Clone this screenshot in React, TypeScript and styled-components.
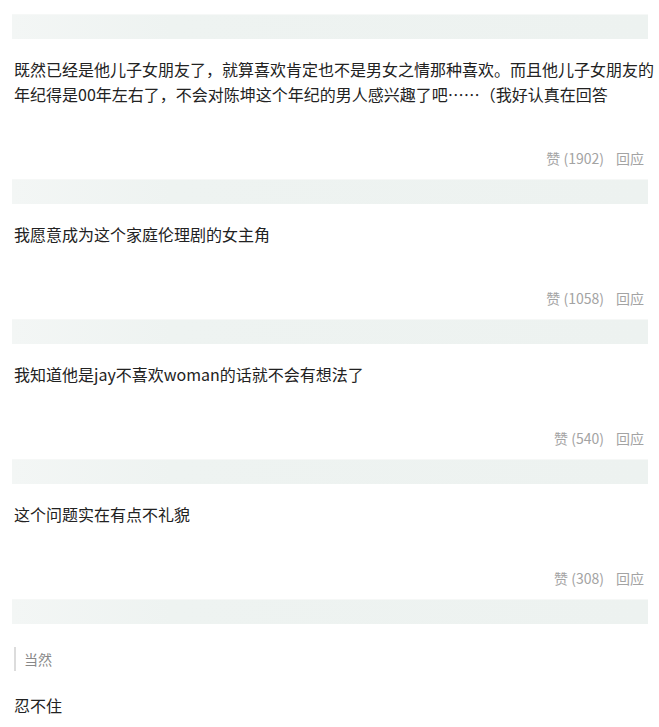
import * as React from "react";
import styled, { createGlobalStyle } from "styled-components";

const GlobalStyle = createGlobalStyle`
  html, body {
    margin: 0;
    padding: 0;
    background: #ffffff;
  }

  body {
    font-family: "Noto Sans CJK SC", "Noto Sans", "Liberation Sans", sans-serif;
    color: #222;
  }
`;

const Page = styled.div`
  width: 659px;
  padding: 14px 11px 0 12px;
  box-sizing: border-box;
`;

const Comment = styled.div`
  display: flex;
  flex-direction: column;
  padding-bottom: 11px;
`;

const AuthorBar = styled.div`
  height: 25px;
  background: linear-gradient(
    90deg,
    #f3f6f5 0%,
    #eef3f1 25%,
    #edf2f0 100%
  );
  border-top: 1px solid #f6f8f7;
  box-sizing: border-box;
`;

const Body = styled.p`
  margin: 18px -10px 0 0;
  padding-left: 2px;
  font-size: 16px;
  line-height: 25px;
  color: #222;
`;

const Actions = styled.div`
  display: flex;
  justify-content: flex-end;
  gap: 12px;
  margin-top: 41px;
  padding-right: 4px;
  font-size: 14px;
  line-height: 20px;
  color: #a3a3a3;
`;

const Action = styled.span`
  cursor: pointer;
`;

const Quote = styled.blockquote`
  margin: 23px 0 0 2px;
  padding-left: 8px;
  border-left: 2px solid #dcdcdc;
  font-size: 14px;
  line-height: 24px;
  color: #888;
`;

const LastBody = styled(Body)`
  margin-top: 22px;
`;

type Item = { text: string; likes: number };

const items: Item[] = [
  {
    text: "既然已经是他儿子女朋友了，就算喜欢肯定也不是男女之情那种喜欢。而且他儿子女朋友的年纪得是00年左右了，不会对陈坤这个年纪的男人感兴趣了吧……（我好认真在回答",
    likes: 1902,
  },
  { text: "我愿意成为这个家庭伦理剧的女主角", likes: 1058 },
  { text: "我知道他是jay不喜欢woman的话就不会有想法了", likes: 540 },
  { text: "这个问题实在有点不礼貌", likes: 308 },
];

const App: React.FC = () => {
  return (
    <>
      <GlobalStyle />
      <Page>
        {items.map((item) => (
          <Comment key={item.likes}>
            <AuthorBar />
            <Body>{item.text}</Body>
            <Actions>
              <Action>赞 ({item.likes})</Action>
              <Action>回应</Action>
            </Actions>
          </Comment>
        ))}
        <Comment>
          <AuthorBar />
          <Quote>当然</Quote>
          <LastBody>忍不住</LastBody>
        </Comment>
      </Page>
    </>
  );
};

export default App;
